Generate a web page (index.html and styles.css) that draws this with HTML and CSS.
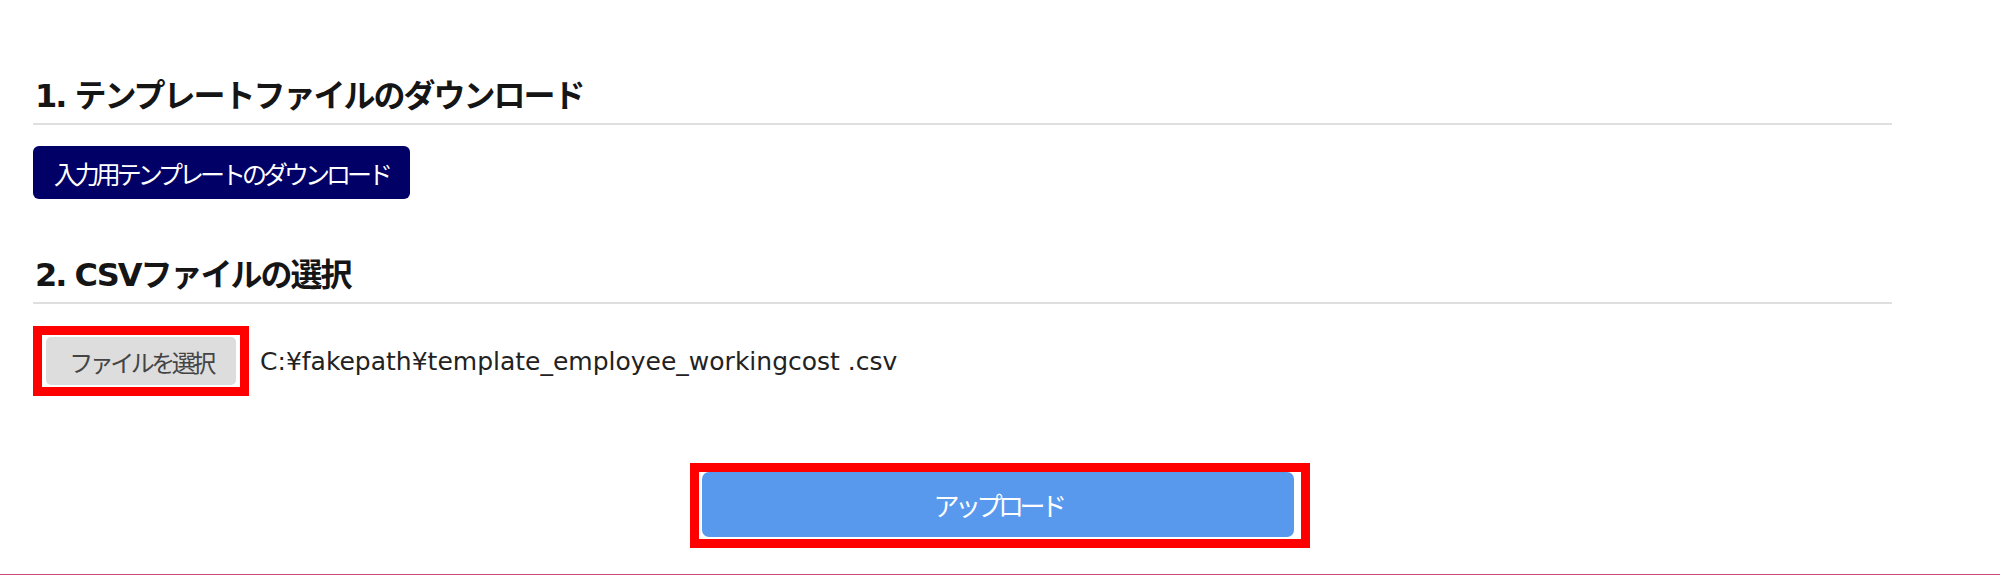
FILE: index.html
```html
<!DOCTYPE html>
<html lang="ja">
<head>
    <meta charset="UTF-8">
    <title>CSVアップロード</title>
    <link rel="stylesheet" href="styles.css">
</head>
<body>

    <div class="container">
        <h2 class="step-title">1. テンプレートファイルのダウンロード</h2>
        <button class="download-btn">入力用テンプレートのダウンロード</button>

        <h2 class="step-title step-two">2. CSVファイルの選択</h2>
        <div class="file-row">
            <span class="mark">
                <button class="file-btn">ファイルを選択</button>
            </span>
            <span class="file-name">C:¥fakepath¥template_employee_workingcost .csv</span>
        </div>
    </div>

    <div class="upload-row">
        <span class="mark mark-upload">
            <button class="upload-btn">アップロード</button>
        </span>
    </div>

    <div class="footer-line"></div>

</body>
</html>
```

FILE: styles.css
```css
body {
    margin: 0;
    background-color: #ffffff;
    font-family: "DejaVu Sans", "Noto Sans CJK JP", sans-serif;
    color: #1e1e1e;
}
.container {
    width: 1859px;
    padding-left: 33px;
}
.step-title {
    margin: 76px 0 0 0;
    padding: 0 0 7px 2px;
    font-size: 32px;
    letter-spacing: -2px;
    line-height: 40px;
    font-weight: bold;
    color: #151515;
    border-bottom: 2px solid #dfdfdf;
}
.step-two {
    margin-top: 56px;
}
button {
    font-family: "Noto Sans CJK JP", sans-serif;
    border: none;
    cursor: pointer;
}
.download-btn {
    display: block;
    margin-top: 21px;
    width: 377px;
    height: 53px;
    background-color: #000066;
    color: #ffffff;
    font-size: 25px;
    letter-spacing: -4px;
    border-radius: 6px;
}
.file-row {
    display: flex;
    align-items: center;
    margin-top: 22px;
}
.mark {
    display: inline-block;
    border: 9px solid #ff0000;
    padding: 2px 4px;
    line-height: 0;
}
.file-btn {
    width: 190px;
    height: 48px;
    background-color: #dddddd;
    color: #444444;
    font-size: 24px;
    letter-spacing: -3.5px;
    border-radius: 5px;
}
.file-name {
    margin-left: 11px;
    font-size: 25px;
    color: #222222;
}
.upload-row {
    margin-top: 67px;
    text-align: center;
}
.mark-upload {
    padding: 0 7px 2px 3px;
}
.upload-btn {
    width: 592px;
    height: 65px;
    background-color: #5899ee;
    color: #ffffff;
    font-size: 26px;
    letter-spacing: -4.5px;
    border-radius: 7px;
}
.footer-line {
    margin-top: 26px;
    height: 1px;
    background-color: #c94a7e;
}
```
